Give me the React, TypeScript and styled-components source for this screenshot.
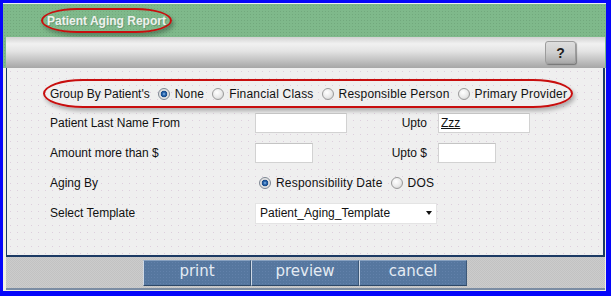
import React from 'react';
import styled, { createGlobalStyle } from 'styled-components';

const GlobalStyle = createGlobalStyle`
  html, body { margin: 0; padding: 0; background: #ffffff; }
  body { font-family: "Liberation Sans", Arial, sans-serif; }
`;

const Frame = styled.div`
  width: 611px;
  height: 296px;
  box-sizing: border-box;
  border-style: solid;
  border-color: #0606fa;
  border-width: 3px 5px 5px 3px;
  padding-top: 1px;
  background: #eceef4;
  display: flex;
  flex-direction: column;
`;

const Header = styled.div`
  padding: 0 1px 0 3px;
  background-color: #7fb98b;
  background-image: radial-gradient(rgba(90, 140, 100, 0.35) 0.6px, transparent 0.9px);
  background-size: 3px 3px;
`;

const TitleRow = styled.div`
  height: 33px;
  display: flex;
  align-items: center;
  padding-left: 35px;
`;

const TitleOval = styled.div`
  box-sizing: border-box;
  width: 131px;
  height: 25px;
  border: 2px solid #c80e0e;
  border-radius: 36px / 12.5px;
  display: flex;
  align-items: center;
  justify-content: center;
  color: #eef1ee;
  font-size: 12px;
  font-weight: bold;
  text-shadow: 1px 1px 0 rgba(70, 100, 70, 0.35);
  box-shadow: 2px 3px 4px rgba(0, 0, 0, 0.3);
`;

const Toolbar = styled.div`
  height: 31px;
  display: flex;
  justify-content: flex-end;
  align-items: center;
  padding-right: 29px;
  background: linear-gradient(
    to bottom,
    #d2d2d2 0%,
    #f1f1f1 22%,
    #e4e4e4 45%,
    #c2c2c2 75%,
    #a6a6a6 100%
  );
`;

const HelpButton = styled.button`
  width: 31px;
  height: 23px;
  box-sizing: border-box;
  padding: 0;
  border: 1px solid #9c9c9c;
  border-radius: 3px;
  background: linear-gradient(to bottom, #dedede 0%, #cfcfcf 50%, #a9a9a9 100%);
  box-shadow: 1px 1px 1px rgba(0, 0, 0, 0.35);
  font-family: "Liberation Sans", Arial, sans-serif;
  font-size: 14px;
  font-weight: bold;
  color: #1e1e1e;
`;

const Main = styled.div`
  flex: 1;
  display: flex;
  flex-direction: column;
  padding: 0 1px 1px 3px;
  background: #f2f1e2;
`;

const Panel = styled.div`
  height: 189px;
  box-sizing: border-box;
  border-style: solid;
  border-color: #1c3a64;
  border-width: 0 2px 2px 1px;
  background-color: #efefef;
  background-image: radial-gradient(rgba(200, 170, 200, 0.45) 0.5px, transparent 0.9px);
  background-size: 7px 7px;
  padding: 11px 0 0 36px;
`;

const GroupOval = styled.div`
  display: inline-flex;
  align-items: center;
  box-sizing: border-box;
  height: 29px;
  padding: 0 4px 0 5px;
  border: 2px solid #c80e0e;
  border-radius: 40px / 14.5px;
  box-shadow: 2px 3px 4px rgba(0, 0, 0, 0.28);
  font-size: 12px;
  color: #111;
`;

const Text = styled.span`
  font-size: 12px;
  color: #111;
  white-space: nowrap;
`;

const Option = styled.label`
  display: inline-flex;
  align-items: center;
  gap: 5px;
  margin-left: 8px;
  font-size: 12px;
  letter-spacing: 0.2px;
  color: #111;
  white-space: nowrap;
`;

const RadioDot = styled.span<{ $checked?: boolean }>`
  width: 12px;
  height: 12px;
  box-sizing: border-box;
  border-radius: 50%;
  border: 1px solid ${(p) => (p.$checked ? '#7d8692' : '#9a9a9a')};
  background: ${(p) =>
    p.$checked
      ? 'radial-gradient(circle at 50% 50%, #8fc0ec 0, #2b66ad 1.6px, #174a8a 3px, #dcdcdc 3.6px, #f4f4f4 100%)'
      : 'radial-gradient(circle at 40% 35%, #ffffff 0, #e9e9e9 55%, #c6c6c6 100%)'};
`;

const Grid = styled.div`
  display: grid;
  grid-template-columns: 205px 136px 36px auto;
  grid-auto-rows: 30px;
  align-items: center;
  margin-left: 7px;
`;

const RightLabel = styled(Text)`
  justify-self: end;
`;

const Field = styled.input<{ $w: number; $offset?: number }>`
  box-sizing: border-box;
  width: ${(p) => p.$w}px;
  height: 20px;
  margin-left: ${(p) => p.$offset ?? 0}px;
  padding: 0 2px;
  border: 1px solid #d2d2d2;
  border-top-color: #c4c4c4;
  background: #ffffff;
  font-family: "Liberation Sans", Arial, sans-serif;
  font-size: 12px;
  color: #111;
  outline: none;
  text-decoration: underline;
`;

const Span3 = styled.div`
  grid-column: 2 / -1;
  display: flex;
  align-items: center;
`;

const RadioGroup = styled(Span3)`
  margin-left: -4px;
`;

const SelectBox = styled.div`
  box-sizing: border-box;
  width: 182px;
  height: 21px;
  display: flex;
  align-items: center;
  justify-content: space-between;
  padding: 0 4px 0 4px;
  background: #ffffff;
  border: 1px solid #e4e4e4;
  font-size: 12px;
  color: #111;
`;

const Caret = styled.span`
  width: 0;
  height: 0;
  border-left: 3.5px solid transparent;
  border-right: 3.5px solid transparent;
  border-top: 4px solid #111;
`;

const BottomBar = styled.div`
  height: 33px;
  box-sizing: border-box;
  border-bottom: 2px solid #7b8ca3;
  display: flex;
  align-items: center;
  padding-left: 137px;
  background-color: #c8c8c8;
  background-image: repeating-conic-gradient(#c2c2c2 0 25%, #cccccc 0 50%);
  background-size: 2px 2px;
`;

const ActionButton = styled.button`
  width: 108px;
  height: 26px;
  box-sizing: border-box;
  padding: 0 0 2px;
  border-style: solid;
  border-width: 1px;
  border-color: #86a0c0 #3c5878 #2e4868 #cfd9e6;
  background-color: #56779f;
  background-image: radial-gradient(rgba(120, 150, 190, 0.35) 0.6px, transparent 0.9px);
  background-size: 3px 3px;
  color: #e4ebf3;
  font-family: "DejaVu Sans", Verdana, sans-serif;
  font-size: 15px;
  line-height: 1;
`;

const groupOptions = ['None', 'Financial Class', 'Responsible Person', 'Primary Provider'];

const RadioOption: React.FC<{ label: string; checked?: boolean }> = ({ label, checked }) => (
  <Option>
    <RadioDot $checked={checked} />
    {label}
  </Option>
);

export default function App() {
  return (
    <>
      <GlobalStyle />
      <Frame>
        <Header>
          <TitleRow>
            <TitleOval>Patient Aging Report</TitleOval>
          </TitleRow>
          <Toolbar>
            <HelpButton>?</HelpButton>
          </Toolbar>
        </Header>
        <Main>
          <Panel>
            <GroupOval>
              <Text>Group By Patient's</Text>
              {groupOptions.map((o, i) => (
                <RadioOption key={o} label={o} checked={i === 0} />
              ))}
            </GroupOval>
            <Grid>
              <Text>Patient Last Name From</Text>
              <Field $w={92} defaultValue="" />
              <RightLabel>Upto</RightLabel>
              <Field $w={92} $offset={11} defaultValue="Zzz" />

              <Text>Amount more than $</Text>
              <Field $w={58} defaultValue="" />
              <RightLabel>Upto $</RightLabel>
              <Field $w={58} $offset={11} defaultValue="" />

              <Text>Aging By</Text>
              <RadioGroup>
                <RadioOption label="Responsibility Date" checked />
                <RadioOption label="DOS" />
              </RadioGroup>

              <Text>Select Template</Text>
              <Span3>
                <SelectBox>
                  <span>Patient_Aging_Template</span>
                  <Caret />
                </SelectBox>
              </Span3>
            </Grid>
          </Panel>
          <BottomBar>
            <ActionButton>print</ActionButton>
            <ActionButton>preview</ActionButton>
            <ActionButton>cancel</ActionButton>
          </BottomBar>
        </Main>
      </Frame>
    </>
  );
}
